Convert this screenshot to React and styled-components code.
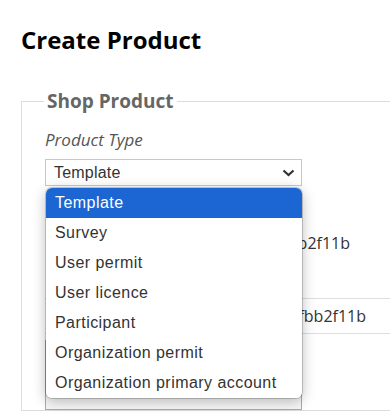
import React, { useState } from 'react'
import styled, { createGlobalStyle } from 'styled-components'

const options = [
  'Template',
  'Survey',
  'User permit',
  'User licence',
  'Participant',
  'Organization permit',
  'Organization primary account',
]

const App = () => {
  const [value, setValue] = useState('Template')
  return (
    <>
      <GlobalStyle />
      <Page>
        <Title>Create Product</Title>
        <Fieldset>
          <Legend>Shop Product</Legend>
          <Label>Product Type</Label>
          <SelectWrap>
            <SelectBox>
              <span>{value}</span>
              <svg width="13" height="8" viewBox="0 0 13 8">
                <polyline points="1.5,1.5 6.5,6 11.5,1.5" fill="none" stroke="#333" strokeWidth="2.2" />
              </svg>
            </SelectBox>
            <Menu>
              {options.map((o) => (
                <Option key={o} $selected={o === value} onClick={() => setValue(o)}>
                  {o}
                </Option>
              ))}
            </Menu>
          </SelectWrap>
          <InfoRow $end={350}>Id: 3a7c-9d6e-40fb2f11b</InfoRow>
          <TableRow $end={366}>Key: 51e0-c4b8-fbb2f11b</TableRow>
          <Box />
        </Fieldset>
      </Page>
    </>
  )
}

export default App

const GlobalStyle = createGlobalStyle`
  html, body {
    margin: 0;
    padding: 0;
    background: #fff;
    overflow: hidden;
  }
`

const Page = styled.div`
  width: 390px;
  height: 417px;
  overflow: hidden;
  padding-left: 21px;
  box-sizing: border-box;
  font-family: "Open Sans", sans-serif;
`

const Title = styled.h1`
  margin: 25px 0 0 0;
  font-size: 24px;
  line-height: 30px;
  font-weight: 700;
  color: #000;
`

const Fieldset = styled.fieldset`
  margin: 33px 0 0 0;
  padding: 0 0 0 23px;
  width: 600px;
  border: 1px solid #dcdcdc;
  min-width: 0;
`

const Legend = styled.legend`
  padding: 0 3px;
  margin-left: -1px;
  font-size: 19px;
  line-height: 26px;
  font-weight: 700;
  color: #666;
`

const Label = styled.div`
  margin-top: 14px;
  font-size: 17px;
  line-height: 24px;
  font-style: italic;
  color: #555;
`

const SelectWrap = styled.div`
  position: relative;
  margin-top: 7px;
  width: 257px;
`

const SelectBox = styled.div`
  box-sizing: border-box;
  height: 27px;
  border: 1px solid #c8c8c8;
  background: #fff;
  display: flex;
  align-items: center;
  justify-content: space-between;
  padding: 0 6px 0 8px;
  font-family: "Liberation Sans", Arial, sans-serif;
  font-size: 16px;
  letter-spacing: 0.2px;
  color: #333;
  svg {
    margin-top: 1px;
  }
`

const Menu = styled.div`
  position: absolute;
  top: 29px;
  left: 1px;
  width: 256px;
  background: #fff;
  border-radius: 6px;
  overflow: hidden;
  box-shadow: 0 0 0 1px rgba(0, 0, 0, 0.18), 0 3px 14px rgba(0, 0, 0, 0.28);
  z-index: 5;
`

const Option = styled.div`
  height: 30px;
  line-height: 30px;
  padding-left: 9px;
  font-family: "Liberation Sans", Arial, sans-serif;
  font-size: 16px;
  letter-spacing: 0.45px;
  color: ${({ $selected }) => ($selected ? '#fff' : '#333')};
  background: ${({ $selected }) => ($selected ? '#1b66d3' : '#fff')};
  white-space: nowrap;
  cursor: default;
`

const InfoRow = styled.div`
  width: ${({ $end }) => $end - 45}px;
  margin-top: 32px;
  height: 50px;
  line-height: 50px;
  text-align: right;
  white-space: nowrap;
  font-size: 16px;
  color: #333;
`

const TableRow = styled.div`
  margin-top: 30px;
  width: 345px;
  height: 36px;
  border-top: 1px solid #dedede;
  border-bottom: 1px solid #dedede;
  box-sizing: border-box;
  display: flex;
  align-items: center;
  justify-content: flex-end;
  padding-right: ${({ $end }) => 390 - $end}px;
  white-space: nowrap;
  font-size: 16px;
  color: #333;
`

const Box = styled.div`
  margin-top: 6px;
  width: 257px;
  height: 70px;
  box-sizing: border-box;
  border: 1px solid #aaa;
  background: #f7f7f7;
`
